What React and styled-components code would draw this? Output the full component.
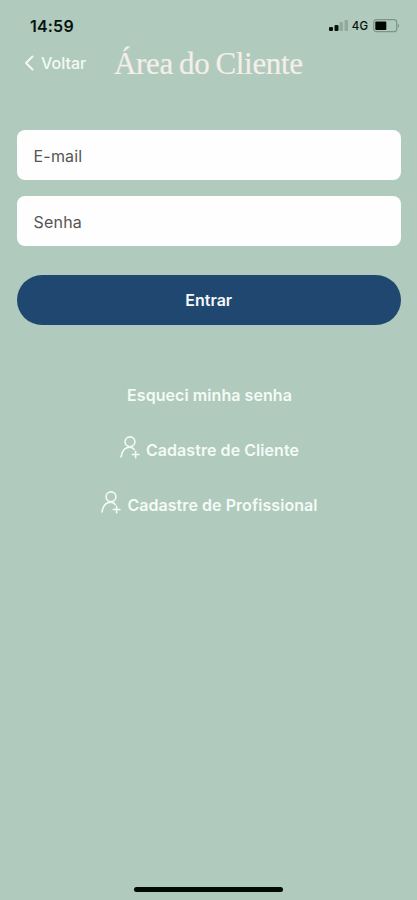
import React from "react";
import styled, { createGlobalStyle } from "styled-components";

const GlobalStyle = createGlobalStyle`
  *, *::before, *::after { box-sizing: border-box; }
  body { margin: 0; background: #b0cabd; }
`;

const Screen = styled.div`
  display: flex;
  flex-direction: column;
  width: 100%;
  max-width: 417px;
  height: 900px;
  background: #b0cabd;
  font-family: Inter, "Liberation Sans", sans-serif;
`;

const StatusBar = styled.div`
  display: flex;
  align-items: center;
  justify-content: space-between;
  height: 43px;
  padding: 8px 17px 0 30px;
  color: #07130f;
`;

const Clock = styled.time`
  font-size: 16px;
  line-height: 20px;
  font-weight: 600;
  letter-spacing: 0.2px;
`;

const Indicators = styled.div`
  display: flex;
  align-items: center;
  height: 20px;
`;

const Network = styled.span`
  margin: 0 5px 0 3px;
  font-size: 11.5px;
  line-height: 20px;
  font-weight: 500;
`;

const Header = styled.header`
  display: flex;
  align-items: center;
  height: 41px;
  padding-left: 24px;
`;

const BackButton = styled.button`
  display: flex;
  align-items: center;
  gap: 7px;
  width: 90px;
  padding: 0 0 1px;
  border: 0;
  background: none;
  color: #f3faf5;
  font: 500 16px/20px Inter, "Liberation Sans", sans-serif;
  white-space: nowrap;
`;

const Title = styled.h1`
  margin: 0;
  color: #f5efea;
  font: 400 31px/40px "Liberation Serif", serif;
  letter-spacing: -0.35px;
  word-spacing: -1.2px;
  -webkit-text-stroke: 0.2px #f5efea;
  white-space: nowrap;
`;

const Form = styled.form`
  display: flex;
  flex-direction: column;
  padding: 46px 16px 0 16.5px;
`;

const Field = styled.label`
  display: flex;
  align-items: center;
  height: 50px;
  margin-bottom: 16.4px;
  padding: 1px 17px 0;
  border-radius: 8px;
  background: #fefefe;
  color: #555;
  font-size: 16px;
  line-height: 20px;
  letter-spacing: 0.2px;
`;

const Input = styled.input`
  flex: 1;
  min-width: 0;
  height: 100%;
  border: 0;
  outline: 0;
  background: transparent;
  font: inherit;
`;

const SubmitButton = styled.button`
  height: 50px;
  margin-top: 12.2px;
  padding: 1px 0 0;
  border: 0;
  border-radius: 25px;
  background: #1f476f;
  color: #f6f9fc;
  font: 600 16px/20px Inter, "Liberation Sans", sans-serif;
`;

const Links = styled.nav`
  display: flex;
  flex-direction: column;
  align-items: center;
  gap: 31px;
  margin-top: 58px;
  padding-left: 2px;
`;

const TextLink = styled.a`
  display: flex;
  align-items: center;
  gap: 6px;
  height: 24px;
  color: #f4fbf7;
  font-size: 16px;
  line-height: 24px;
  font-weight: 600;
  letter-spacing: 0.06px;
  white-space: nowrap;
`;

const PersonGlyph = styled.svg`
  width: 20px;
  height: 24px;
  flex: none;
  margin-top: -6px;
`;

const HomeIndicator = styled.div`
  align-self: center;
  width: 149px;
  height: 5px;
  margin-top: auto;
  margin-bottom: 8px;
  border-radius: 3px;
  background: #020906;
`;

const Signal = () => (
  <svg width="20" height="13" viewBox="0 0 20 13" aria-hidden="true">
    <rect x="0" y="8" width="4" height="4" rx="1" fill="#07130f" />
    <rect x="5.5" y="6" width="4" height="6" rx="1" fill="#07130f" />
    <rect x="10.5" y="3" width="3.5" height="9" rx="1" fill="#8fa99c" />
    <rect x="15.5" y="1" width="3.5" height="11" rx="1" fill="#8fa99c" />
  </svg>
);

const Battery = () => (
  <svg width="27" height="14" viewBox="0 0 27 14" aria-hidden="true">
    <rect x="0.7" y="0.7" width="23" height="12" rx="2.8" fill="none" stroke="#7d9588" strokeWidth="1.2" />
    <rect x="2.3" y="2.5" width="11" height="8.4" rx="1" fill="#020705" />
    <path d="M24.8 4.5c1.8.8 1.8 3.8 0 4.6z" fill="#7d9588" />
  </svg>
);

const Chevron = () => (
  <svg width="10" height="16" viewBox="0 0 10 16" aria-hidden="true">
    <path d="M8.5 1.5 2 8l6.5 6.5" fill="none" stroke="#f3faf5" strokeWidth="2" strokeLinecap="round" strokeLinejoin="round" />
  </svg>
);

const PersonAdd = () => (
  <PersonGlyph viewBox="0 0 20 24" fill="none" stroke="#f4fbf7" strokeWidth="1.6" strokeLinecap="round" aria-hidden="true">
    <circle cx="10" cy="6.8" r="4.9" />
    <path d="M1 22c.9-5.7 3.6-9.9 9-9.9 1.8 0 3.2.9 4.2 2.4" />
    <path d="M15.6 16.2v6.6M12.3 19.5h6.6" />
  </PersonGlyph>
);

export default function App() {
  return (
    <Screen>
      <GlobalStyle />
      <StatusBar>
        <Clock>14:59</Clock>
        <Indicators>
          <Signal />
          <Network>4G</Network>
          <Battery />
        </Indicators>
      </StatusBar>
      <Header>
        <BackButton type="button"><Chevron />Voltar</BackButton>
        <Title>Área do Cliente</Title>
      </Header>
      <Form onSubmit={(event) => event.preventDefault()}>
        <Field>E-mail<Input type="email" /></Field>
        <Field>Senha<Input type="password" /></Field>
        <SubmitButton type="submit">Entrar</SubmitButton>
      </Form>
      <Links>
        <TextLink>Esqueci minha senha</TextLink>
        <TextLink><PersonAdd />Cadastre de Cliente</TextLink>
        <TextLink><PersonAdd />Cadastre de Profissional</TextLink>
      </Links>
      <HomeIndicator />
    </Screen>
  );
}
